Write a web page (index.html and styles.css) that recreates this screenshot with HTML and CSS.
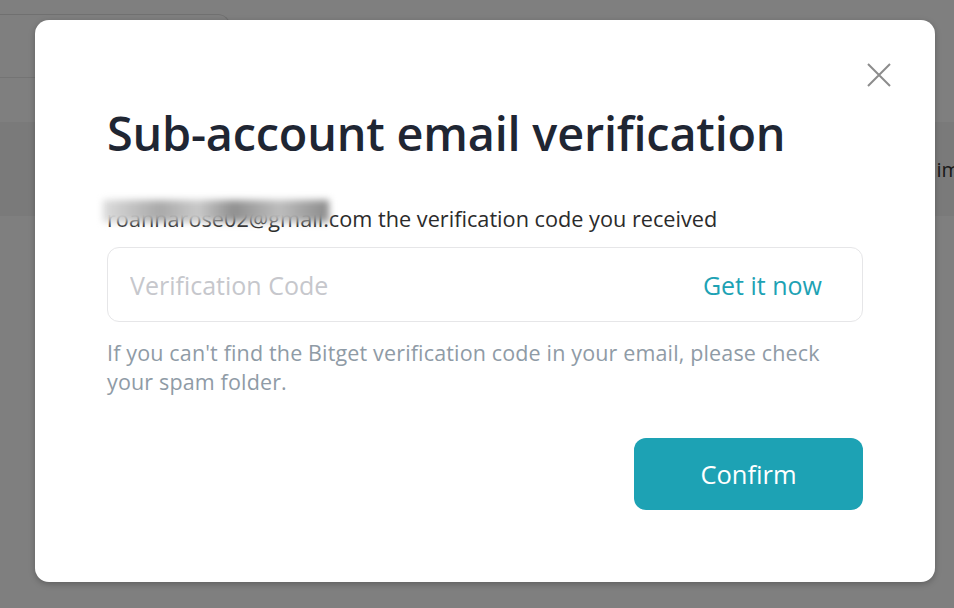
FILE: index.html
```html
<!DOCTYPE html>
<html>
<head>
<meta charset="utf-8">
<link rel="stylesheet" href="styles.css">
</head>
<body>
<div class="page">
  <div class="page-top">
    <div class="page-card"></div>
  </div>
  <div class="page-band"><span class="band-text">im</span></div>
</div>
<div class="overlay">
  <div class="modal">
    <button class="close" aria-label="close">
      <svg width="24" height="24" viewBox="0 0 24 24"><path d="M1 1L23 23M23 1L1 23" stroke="#8c8c8c" stroke-width="2" fill="none"/></svg>
    </button>
    <h1 class="title">Sub-account email verification</h1>
    <p class="email"><span class="masked">roannarose02@gmail<span class="blur"></span></span>.com the verification code you received</p>
    <div class="field">
      <input class="code" placeholder="Verification Code">
      <span class="get">Get it now</span>
    </div>
    <p class="hint">If you can't find the Bitget verification code in your email, please check your spam folder.</p>
    <div class="actions">
      <button class="confirm">Confirm</button>
    </div>
  </div>
</div>
</body>
</html>
```
FILE: styles.css
```css
* { box-sizing: border-box; }
html, body { margin: 0; padding: 0; }
body {
  width: 954px;
  height: 608px;
  overflow: hidden;
  font-family: "Open Sans", "Noto Sans", sans-serif;
  background: #ffffff;
  position: relative;
}
.page { height: 608px; display: flex; flex-direction: column; }
.page-top { height: 122px; padding-top: 14px; display: flex; flex-direction: column; }
.page-card {
  width: 230px; height: 64px;
  border-top: 1px solid #e0e0e0; border-right: 1px solid #e0e0e0;
  border-top-right-radius: 12px;
  border-bottom: 1px solid #e8e8e8;
}
.page-band {
  height: 94px; background: #f4f4f4;
  display: flex; justify-content: flex-end; align-items: center;
  font-size: 20px; color: #333;
  overflow: hidden;
}
.band-text { margin-right: -6px; }
.overlay {
  position: absolute; inset: 0;
  background: rgba(0,0,0,0.5);
  padding: 20px 19px 26px 35px;
}
.modal {
  position: relative;
  width: 900px; height: 562px;
  background: #fff;
  border-radius: 14px;
  box-shadow: 0 2px 6px rgba(0,0,0,0.25);
  padding: 82px 72px 0 72px;
  display: flex; flex-direction: column;
}
.close {
  position: absolute; top: 43px; right: 44px;
  border: 0; background: none; padding: 0; width: 24px; height: 24px;
}
.title {
  margin: 0;
  font-size: 46.8px; font-weight: 600; line-height: 62px;
  color: #1f2633;
  letter-spacing: -0.2px;
}
.email {
  margin: 41px 0 0;
  font-size: 21.7px; line-height: 28px; color: #2b2b2b;
}
.masked { position: relative; color: #2b2b2b; }
.blur {
  position: absolute; left: -4px; right: -6px; top: -4px; height: 22px;
  background: linear-gradient(90deg, #dcdcdc, #a9a9a9 25%, #c9c9c9 42%, #8f8f8f 58%, #bdbdbd 78%, #8a8a8a);
  filter: blur(3.5px);
}
.field {
  margin-top: 14px;
  height: 75px;
  border: 1px solid #e6e6e8;
  border-radius: 12px;
  display: flex; align-items: center;
  padding: 0 40px 0 22px;
}
.code {
  flex: 1; border: 0; outline: none; background: none;
  font-family: inherit; font-size: 25px; color: #333;
  padding: 0;
}
.code::placeholder { color: #c6c7cc; }
.get { font-size: 25px; color: #1da2b4; }
.hint {
  margin: 16px 0 0;
  max-width: 730px;
  font-size: 21.5px; line-height: 29px; color: #8f9ba6;
  letter-spacing: 0.15px;
}
.actions { display: flex; justify-content: flex-end; margin-top: 42px; }
.confirm {
  width: 229px; height: 72px;
  border: 0; border-radius: 12px;
  background: #1da2b4; color: #fff;
  font-family: inherit; font-size: 25.5px;
}
```
